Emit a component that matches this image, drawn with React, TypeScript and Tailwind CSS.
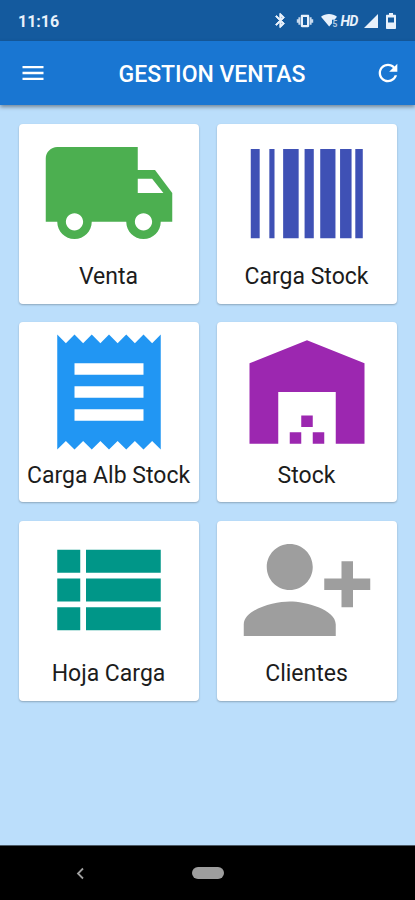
import type { ReactNode } from 'react'

interface Tile {
  label: string
  color: string
  icon: ReactNode
}

const tiles: Tile[] = [
  {
    label: 'Venta',
    color: 'text-[#4caf50]',
    icon: (
      <path d="M20 8h-3V4H3c-1.1 0-2 .9-2 2v11h2c0 1.66 1.34 3 3 3s3-1.34 3-3h6c0 1.66 1.34 3 3 3s3-1.34 3-3h2v-5l-3-4zM6 18.5c-.83 0-1.5-.67-1.5-1.5s.67-1.5 1.5-1.5 1.5.67 1.5 1.5-.67 1.5-1.5 1.5zm13.5-9l1.96 2.5H17V9.5h2.5zm-1.5 9c-.83 0-1.5-.67-1.5-1.5s.67-1.5 1.5-1.5 1.5.67 1.5 1.5-.67 1.5-1.5 1.5z" />
    ),
  },
  {
    label: 'Carga Stock',
    color: 'text-[#3f51b5]',
    icon: (
      <path d="M2.22 4.35h1.55v15.5H2.22zM5.45 4.35h.9v15.5h-.9zM7.85 4.35h2.7v15.5h-2.7zM11.58 4.35h1.6v15.5h-1.6zM14.3 4.35h2.65v15.5H14.3zM17.75 4.35h2v15.5h-2zM20.4 4.35h1.3v15.5h-1.3z" />
    ),
  },
  {
    label: 'Carga Alb Stock',
    color: 'text-[#2196f3]',
    icon: (
      <path d="M18 17H6v-2h12v2zm0-4H6v-2h12v2zm0-4H6V7h12v2zM3 22l1.5-1.5L6 22l1.5-1.5L9 22l1.5-1.5L12 22l1.5-1.5L15 22l1.5-1.5L18 22l1.5-1.5L21 22V2l-1.5 1.5L18 2l-1.5 1.5L15 2l-1.5 1.5L12 2l-1.5 1.5L9 2 7.5 3.5 6 2 4.5 3.5 3 2v20z" />
    ),
  },
  {
    label: 'Stock',
    color: 'text-[#9c27b0]',
    icon: (
      <path d="M2 21V7l10-4 10 4v14h-5v-9H7v9H2zM11 16.1h2v2h-2zM9 19h2v2H9zM13 19h2v2h-2z" />
    ),
  },
  {
    label: 'Hoja Carga',
    color: 'text-[#009688]',
    icon: (
      <path d="M3 14h4v-4H3v4zm0 5h4v-4H3v4zM3 9h4V5H3v4zm5 5h13v-4H8v4zm0 5h13v-4H8v4zM8 5v4h13V5H8z" />
    ),
  },
  {
    label: 'Clientes',
    color: 'text-[#9e9e9e]',
    icon: (
      <path d="M13 8c0-2.21-1.79-4-4-4S5 5.79 5 8s1.79 4 4 4 4-1.79 4-4zm2 2v2h3v3h2v-3h3v-2h-3V7h-2v3h-3zM1 18v2h16v-2c0-2.66-5.33-4-8-4s-8 1.34-8 4z" />
    ),
  },
]

function StatusBar() {
  return (
    <div className="flex h-[41px] shrink-0 items-center bg-[#145a9e] pl-[18px] pr-[19px] text-[#e8f1fb]">
      <span className="mt-[2px] text-[16px] font-bold leading-none">11:16</span>
      <div className="ml-auto flex items-center">
        <svg viewBox="0 0 24 24" className="h-[17px] w-[17px]" fill="currentColor">
          <path d="M17.71 7.71L12 2h-1v7.59L6.41 5 5 6.41 10.59 12 5 17.59 6.41 19 11 14.41V22h1l5.71-5.71-4.3-4.29 4.3-4.29zM13 5.83l1.88 1.88L13 9.59V5.83zm1.88 10.46L13 18.17v-3.76l1.88 1.88z" stroke="currentColor" strokeWidth="1.2" />
        </svg>
        <svg viewBox="0 0 18 14" className="ml-[7px] h-[14px] w-[18px]" fill="currentColor">
          <path fillRule="evenodd" d="M6 .8h6c.7 0 1.2.5 1.2 1.200v10c0 .7-.5 1.200-1.200 1.200H6c-.7 0-1.200-.5-1.200-1.200V2C4.800 1.300 5.300.8 6 .8zM7 3v8h4V3z" />
          <path d="M2.400 3.200h2v7.600h-2zM13.600 3.200h2v7.600h-2zM.8 5.300h1.600v3.400H.8zM15.600 5.300h1.600v3.400h-1.600z" opacity="0.85" />
        </svg>
        <svg viewBox="0 0 18 15" className="ml-[7px] h-[15px] w-[18px]" fill="currentColor">
          <path d="M0 3.800C4.600 0 11.400 0 16 3.800L13.600 6.800H11v3.500L8.200 13.500z" />
          <text x="11.400" y="13.800" fontSize="8.500" fontWeight="700" fontFamily="Roboto, sans-serif" opacity="0.75">5</text>
        </svg>
        <span className="ml-px text-[14px] font-bold italic leading-none tracking-[-0.4px]">HD</span>
        <svg viewBox="0 0 14 14" className="ml-[6px] h-[14px] w-[14px]" fill="currentColor">
          <path d="M0 14L14 0v14z" />
        </svg>
        <svg viewBox="0 0 10 16" className="ml-[8px] h-[16px] w-[10px]" fill="currentColor">
          <path fillRule="evenodd" d="M3 0h4v1.700h2c.6 0 1 .4 1 1V15c0 .6-.4 1-1 1H1c-.6 0-1-.4-1-1V2.700c0-.6.4-1 1-1h2zM2 4.500v5h6v-5z" />
        </svg>
      </div>
    </div>
  )
}

function AppBar() {
  return (
    <header className="z-10 flex h-16 shrink-0 items-center justify-between bg-[#1976d2] pl-[19px] pr-[13px] text-white shadow-[0_2px_4px_rgba(0,0,0,0.4)]">
      <svg viewBox="0 0 24 24" className="h-[28px] w-[28px]" fill="currentColor">
        <path d="M3 18h18v-2H3v2zm0-5h18v-2H3v2zm0-7v2h18V6H3z" />
      </svg>
      <h1 className="ml-[3px] mt-[2px] whitespace-nowrap text-[23px] font-medium leading-none">GESTION VENTAS</h1>
      <svg viewBox="0 0 24 24" className="h-[28px] w-[28px]" fill="currentColor">
        <path d="M17.65 6.35C16.2 4.9 14.21 4 12 4c-4.42 0-7.99 3.58-7.99 8s3.57 8 7.99 8c3.73 0 6.84-2.55 7.73-6h-2.08c-.82 2.33-3.04 4-5.65 4-3.31 0-6-2.69-6-6s2.69-6 6-6c1.66 0 3.14.69 4.22 1.78L13 11h7V4l-2.35 2.35z" />
      </svg>
    </header>
  )
}

function NavigationBar() {
  return (
    <footer className="flex h-[55px] shrink-0 items-center border-t border-[#4c5a66] bg-black pl-[76px]">
      <svg viewBox="0 0 9 13" className="h-[13px] w-[9px] text-[#a0a0a0]" fill="none" stroke="currentColor" strokeWidth="1.8">
        <path d="M7 1.5L2 6.5l5 5" />
      </svg>
      <div className="ml-[107px] h-[12px] w-[32px] rounded-full bg-[#9e9e9e]" />
    </footer>
  )
}

export default function App() {
  return (
    <div className="flex h-[900px] w-[415px] flex-col overflow-hidden bg-[#bbdefb] font-['Roboto',sans-serif]">
      <StatusBar />
      <AppBar />
      <main className="grid flex-1 grid-cols-2 content-start gap-x-[18px] gap-y-[18.25px] px-[18.5px] pt-[19px]">
        {tiles.map(({ label, color, icon }) => (
          <button
            key={label}
            className="flex h-[180px] flex-col items-center rounded-[4px] bg-white shadow-[0_1px_2px_rgba(0,0,0,0.25)]"
          >
            <svg viewBox="0 0 24 24" className={`mt-[0.3px] h-[138px] w-[138px] shrink-0 ${color}`} fill="currentColor">
              {icon}
            </svg>
            <span className="mt-px whitespace-nowrap text-[23px] leading-[28px] text-[#1c1c1c]">{label}</span>
          </button>
        ))}
      </main>
      <NavigationBar />
    </div>
  )
}
